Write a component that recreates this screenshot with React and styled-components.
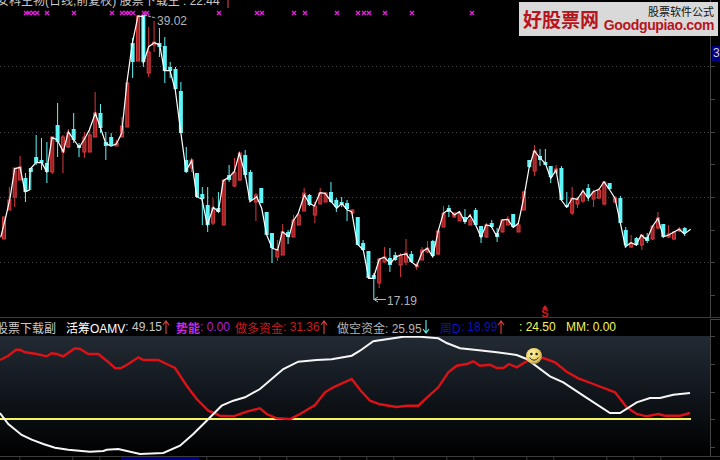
import styled, { createGlobalStyle } from 'styled-components';

const GlobalStyle = createGlobalStyle`
  html, body {
    margin: 0;
    padding: 0;
    background: #000;
  }
`;

const FONT = '"Liberation Sans", "Noto Sans CJK SC", sans-serif';

// type, high, body top, body bottom, low
const CANDLES = [
  ['r',217,217,239,239],['r',187,200,210,210],['r',168,168,197,207],['r',156,167,180,180],
  ['c',173,178,192,202],['c',168,168,172,190],['c',135,157,163,165],['c',138,160,163,170],
  ['c',142,163,172,183],['r',137,137,172,174],['c',103,125,142,157],['r',135,137,152,173],
  ['r',129,133,147,148],['c',113,129,140,143],['c',143,145,148,157],['r',132,137,152,158],
  ['r',130,135,152,152],['r',92,113,137,137],['c',104,113,128,133],['c',132,142,146,160],
  ['c',133,137,145,145],['r',140,143,146,146],['r',117,126,137,137],['r',82,83,127,127],
  ['c',38,43,62,78],['r',16,16,61,61],['c',15,15,62,67],['r',27,52,73,77],
  ['r',21,42,45,52],['c',28,43,47,57],['c',37,46,71,83],['c',62,67,71,78],
  ['c',67,69,89,90],['c',82,91,133,133],['c',147,160,172,173],['r',158,160,168,172],
  ['c',173,173,197,198],['c',187,194,199,225],['c',187,205,225,232],['r',198,208,223,225],
  ['c',192,208,212,213],['r',180,180,225,225],['c',165,175,180,182],['r',158,172,186,187],
  ['r',153,153,180,181],['c',150,155,175,178],['c',170,172,200,200],['r',193,195,202,221],
  ['c',188,188,203,203],['c',212,212,235,235],['c',233,233,248,263],['r',240,250,257,261],
  ['r',224,232,255,255],['c',230,232,237,244],['r',215,220,237,237],['r',213,215,225,225],
  ['r',188,193,211,211],['c',194,195,205,206],['r',202,206,215,223],['r',188,193,204,204],
  ['r',192,193,202,202],['c',182,192,202,203],['c',198,200,207,212],['c',197,202,205,207],
  ['c',200,203,209,221],['r',209,210,213,215],['c',217,217,245,245],['c',240,243,250,251],
  ['c',251,251,278,278],['c',273,275,279,300],['r',259,259,283,288],['r',247,257,262,263],
  ['c',248,258,265,272],['c',252,255,260,261],['r',253,255,265,277],['r',239,253,262,265],
  ['c',251,254,262,263],['r',263,265,267,270],['r',247,250,260,260],['r',241,248,252,253],
  ['c',240,241,256,257],['r',230,231,254,255],['r',206,213,227,227],['c',205,208,212,217],
  ['r',212,213,217,218],['r',211,213,221,221],['c',209,217,222,224],['r',214,220,225,225],
  ['c',208,210,225,225],['c',226,226,237,243],['r',223,225,237,238],['c',220,223,227,228],
  ['c',228,233,237,242],['r',219,220,232,232],['r',216,219,225,225],['c',214,214,227,228],
  ['r',223,225,232,232],['r',191,192,210,210],['c',160,160,167,168],['r',145,151,171,176],
  ['c',149,156,160,166],['c',149,162,165,165],['c',166,166,177,183],['r',165,169,173,174],
  ['c',166,168,200,201],['c',192,205,207,208],['r',187,198,213,215],['r',197,199,204,208],
  ['r',189,192,201,203],['c',184,188,197,201],['r',190,192,199,207],['r',188,190,198,199],
  ['r',181,182,204,205],['c',183,183,189,190],['r',196,198,202,203],['c',196,198,223,224],
  ['c',227,230,245,248],['r',235,243,247,248],['c',237,238,245,246],['r',235,235,245,250],
  ['c',233,237,241,243],['r',225,226,239,240],['r',212,218,228,229],['c',224,224,237,238],
  ['r',225,234,237,238],['r',231,232,239,240],['r',227,229,231,232],['c',227,228,233,236],
];

const zoomed = (ox, oy, pts) => pts.map(([x, y]) => [ox + x / 3, oy + y / 3]);
const toPoints = (pts) => pts.map(([x, y]) => `${x.toFixed(1)},${y.toFixed(1)}`).join(' ');

const PRICE_LINE = [
  ...zoomed(0, 130, [[2,322],[18,258],[30,205],[44,116],[60,112],[75,185],[88,180],[90,118],[108,98],[125,98],[140,125],[156,22],[172,30],[190,65],[205,5],[222,30],[238,52],[253,28],[268,0]]),
  ...zoomed(0, 0, [[286,340],[301,382],[317,430],[333,438],[349,432],[365,400],[381,245],[397,130],[414,48],[430,50],[430,190],[446,140],[463,128],[479,135],[493,212],[510,212],[526,270],[542,395]]),
  ...zoomed(0, 130, [[558,122],[575,92],[590,200],[606,208],[622,285],[640,232],[655,245],[670,152],[688,140],[703,125],[718,70]]),
  ...zoomed(240, 170, [[15,10],[30,95],[50,80],[65,115],[80,195],[97,235],[113,240],[127,185],[147,200],[160,152],[175,130],[193,75],[208,100],[223,108],[240,68],[255,70],[274,95],[290,115],[305,100],[322,120],[335,125],[352,222],[370,240],[386,325],[400,325],[418,268],[433,262],[451,280],[466,262],[482,255],[499,252],[514,275],[530,288],[547,245],[562,235],[578,260],[595,182],[610,130],[627,118],[643,135],[658,125],[675,155],[690,135],[707,165]]),
  ...zoomed(480, 130, [[3,322],[18,285],[33,288],[50,318],[66,270],[83,268],[100,292],[115,280],[132,200],[148,110],[163,62],[181,85],[196,100],[212,145],[228,120],[244,210],[260,232],[277,205],[292,208],[309,182],[325,205],[340,185],[357,178],[372,155],[388,178],[405,205],[421,278],[436,350],[453,338],[468,345],[484,315],[500,330],[517,290],[534,265],[550,320],[566,315],[583,305],[598,298],[613,312],[632,298]]),
];

const RED_LINE = [
  ...zoomed(0, -37, [[0,183],[25,170],[48,152],[60,152],[75,160],[110,165],[140,172],[155,163],[170,165],[190,172],[225,148],[240,150],[265,165],[295,165],[320,185],[345,207],[362,208],[385,195],[415,175],[430,183],[475,183],[500,195],[525,207],[560,260],[590,300],[625,335],[660,350],[700,352],[740,338],[780,328],[800,345],[830,358],[870,360],[900,345],[945,318],[975,280],[1000,265],[1055,240],[1080,272]]),
  ...zoomed(360, -37, [[30,305],[60,316],[110,324],[140,320],[175,320],[205,292],[235,265],[265,220],[290,200],[320,195],[340,187],[360,200],[390,197],[410,207],[430,207],[447,195],[470,205],[500,187],[520,177],[550,177],[585,190],[620,218],[655,238],[700,255],[765,280],[800,325],[830,345],[860,352],[895,345],[915,350],[960,350],[990,342]]),
];

const WHITE_LINE = [
  ...zoomed(0, -37, [[0,342],[25,375],[65,408],[95,422],[130,435],[165,446],[205,452],[270,458],[310,456],[320,452],[355,450],[420,465],[490,462],[540,440],[580,405],[620,365],[665,320],[700,305],[735,295],[780,270],[850,210],[895,188],[950,183],[995,181],[1055,170],[1080,155]]),
  ...zoomed(360, -37, [[40,127],[130,113],[180,113],[235,118],[260,132],[300,148],[350,153],[410,160],[470,168],[500,180],[570,232],[610,250],[670,290],[750,342],[780,342],[830,310],[870,297],[900,297],[940,287],[990,282]]),
];

const MARKS = [26,29,33,37,47,74,112,122,126,129,133,144,147,219,257,262,294,305,337,358,364,369,385,412,472];
const GRID_ROWS = [66, 132, 197, 262];
const AXIS_TICKS = [33, 66, 99, 132, 164, 197, 230, 262, 295];
const PANEL_TICKS = [0, 28, 56, 83, 111];

const Page = styled.div`
  width: 720px;
  height: 460px;
  background: #000;
  display: flex;
  flex-direction: column;
  overflow: hidden;
  font-family: ${FONT};
`;

const PriceRow = styled.div`
  height: 317px;
  display: flex;
  border-bottom: 1px solid #3c3c3c;
`;

const PricePane = styled.div`
  position: relative;
  width: 710px;
  height: 317px;
  overflow: hidden;
`;

const Canvas = styled.svg`
  display: block;
`;

const TitleLine = styled.div`
  position: absolute;
  top: -6px;
  left: -3px;
  display: flex;
  align-items: center;
  gap: 4px;
  font-size: 12px;
  line-height: 14px;
  color: #c8c8c8;
  white-space: nowrap;
`;

const Axis = styled.div`
  position: relative;
  flex: 1;
  border-left: 1px solid #444;
`;

const AxisTick = styled.i`
  position: absolute;
  left: 0;
  top: ${(p) => p.$y}px;
  width: 4px;
  height: 1px;
  background: #444;
`;

const AxisBadge = styled.div`
  position: absolute;
  left: 1px;
  top: 46px;
  width: 20px;
  height: 15px;
  padding-left: 1px;
  background: #000080;
  color: #d0d0d0;
  font-size: 12px;
  line-height: 15px;
`;

const Logo = styled.div`
  position: absolute;
  left: 519px;
  top: 2px;
  width: 199px;
  height: 34px;
  z-index: 2;
  display: flex;
  align-items: flex-end;
  padding: 0 4px 3px;
  box-sizing: border-box;
  background: #d9d9d9;
  white-space: nowrap;
`;

const LogoMark = styled.div`
  font-family: "Noto Sans CJK SC", sans-serif;
  font-size: 19px;
  font-weight: 700;
  line-height: 28px;
  color: #b8141e;
`;

const LogoSide = styled.div`
  flex: 1;
  display: flex;
  flex-direction: column;
  align-items: flex-end;
  margin-left: 3px;
`;

const LogoTag = styled.div`
  font-family: "Noto Sans CJK SC", sans-serif;
  font-size: 11px;
  line-height: 13px;
  color: #111;
`;

const LogoUrl = styled.div`
  font-size: 14px;
  font-weight: 700;
  line-height: 15px;
  letter-spacing: -0.35px;
  color: #b8141e;
`;

const InfoRow = styled.div`
  height: 19px;
  display: flex;
`;

const InfoBar = styled.div`
  width: 710px;
  display: flex;
  align-items: center;
  overflow: hidden;
  font-size: 12px;
  white-space: nowrap;
`;

const InfoItem = styled.div`
  flex: none;
  width: ${(p) => p.$w}px;
  display: flex;
  align-items: center;
  color: ${(p) => p.$color};
  margin-left: ${(p) => p.$shift || 0}px;
`;

const InfoName = styled.span`
  color: ${(p) => p.$color};
  font-weight: ${(p) => (p.$bold ? 700 : 400)};
`;

const InfoCorner = styled.div`
  flex: 1;
  border-left: 1px solid #444;
  border-top: 1px solid #444;
  margin-top: 1px;
`;

const IndicatorRow = styled.div`
  height: 120px;
  display: flex;
`;

const IndicatorPane = styled.div`
  position: relative;
  width: 710px;
  height: 120px;
  overflow: hidden;
  background: linear-gradient(180deg, #222a33 0%, #10151b 50%, #000 100%);
`;

const TimeAxis = styled.div`
  height: 3px;
  display: flex;
  border-top: 1px solid #3c3c3c;
  background: repeating-linear-gradient(90deg, transparent 0 26px, #3c3c3c 26px 26.7px) -6.7px 0;
`;

const ActiveRange = styled.div`
  width: 78px;
  margin-left: 121px;
  background: #00007c;
`;

const Arrow = ({ color, down }) => (
  <svg width="8" height="14" viewBox="0 0 8 14" fill="none" stroke={color} strokeWidth="1.1">
    {down ? <path d="M4 0V13M1 9L4 13L7 9" /> : <path d="M4 14V1M1 5L4 1L7 5" />}
  </svg>
);

const Candle = ({ index, data }) => {
  const [type, high, top, bottom, low] = data;
  const x = 4 + index * 5.36;
  const red = type === 'r';
  const color = red ? '#d83a3c' : '#5ef6f8';
  return (
    <g>
      <line x1={x} x2={x} y1={high} y2={low} stroke={color} strokeWidth="1" />
      {red ? (
        <rect x={x - 1.5} y={top} width="3" height={bottom - top} fill="#9c2226" stroke={color} strokeWidth="1" />
      ) : (
        <rect x={x - 2} y={top} width="4" height={Math.max(bottom - top, 1)} fill={color} />
      )}
    </g>
  );
};

const PriceChart = () => (
  <Canvas width="710" height="317">
    {GRID_ROWS.map((y) => (
      <line key={y} x1="0" x2="709" y1={y + 0.5} y2={y + 0.5} stroke="#454545" strokeDasharray="1 3" />
    ))}
    {MARKS.map((x) => (
      <g key={x} stroke="#e020d8" strokeWidth="1.5">
        <line x1={x - 2} x2={x + 2} y1="11" y2="15" />
        <line x1={x - 2} x2={x + 2} y1="15" y2="11" />
      </g>
    ))}
    {CANDLES.map((c, i) => (
      <Candle key={i} index={i} data={c} />
    ))}
    <polyline points={toPoints(PRICE_LINE)} fill="none" stroke="#fff" strokeWidth="1.2" />
    <path d="M144 15L156 18" stroke="#bbb" strokeDasharray="3 1" />
    <text x="157" y="25" fill="#b4b4b4" fontFamily={FONT} fontSize="12">39.02</text>
    <path d="M374 299.5H386M374 299.5L378 297M374 299.5L378 302" stroke="#b4b4b4" fill="none" />
    <text x="387" y="305" fill="#b4b4b4" fontFamily={FONT} fontSize="12">17.19</text>
    <path d="M545 305L548 309H542Z" fill="#d01c20" />
    <text x="545" y="317" fill="#d01c20" fontFamily={FONT} fontSize="11" fontWeight="700" textAnchor="middle">S</text>
  </Canvas>
);

const Smiley = ({ cx, cy }) => (
  <g>
    <defs>
      <radialGradient id="smile" cx="40%" cy="35%" r="70%">
        <stop offset="0%" stopColor="#fff6a8" />
        <stop offset="70%" stopColor="#e8c860" />
        <stop offset="100%" stopColor="#9c8a50" />
      </radialGradient>
    </defs>
    <circle cx={cx} cy={cy} r="8" fill="url(#smile)" />
    <circle cx={cx - 2.6} cy={cy - 2} r="1.3" fill="#222" />
    <circle cx={cx + 2.6} cy={cy - 2} r="1.3" fill="#222" />
    <path d={`M${cx - 4.5} ${cy + 1.5}Q${cx} ${cy + 7} ${cx + 4.5} ${cy + 1.5}`} fill="none" stroke="#333" strokeWidth="1" />
  </g>
);

const IndicatorChart = () => (
  <Canvas width="710" height="120">
    <line x1="0" x2="691" y1="83" y2="83" stroke="#f4f45c" strokeWidth="2" />
    <polyline points={toPoints(RED_LINE)} fill="none" stroke="#dc1216" strokeWidth="2.4" />
    <polyline points={toPoints(WHITE_LINE)} fill="none" stroke="#f6f6f6" strokeWidth="2" />
    <Smiley cx={534} cy={20} />
  </Canvas>
);

export default function App() {
  return (
    <Page>
      <GlobalStyle />
      <PriceRow>
        <PricePane>
          <TitleLine>
            安科生物(日线,前复权) 股票下载主 : 22.44
            <Arrow color="#e04040" />
          </TitleLine>
          <PriceChart />
        </PricePane>
        <Axis>
          {AXIS_TICKS.map((y) => (
            <AxisTick key={y} $y={y} />
          ))}
          <AxisBadge>35</AxisBadge>
        </Axis>
        <Logo>
          <LogoMark>好股票网</LogoMark>
          <LogoSide>
            <LogoTag>股票软件公式</LogoTag>
            <LogoUrl>Goodgupiao.com</LogoUrl>
          </LogoSide>
        </Logo>
      </PriceRow>
      <InfoRow>
        <InfoBar>
          <InfoItem $w={62} $shift={-4} $color="#c8c8c8">股票下载副</InfoItem>
          <InfoItem $w={112} $shift={8} $color="#c8c8c8">
            <InfoName $color="#fff">活筹OAMV</InfoName>: 49.15
            <Arrow color="#e04040" />
          </InfoItem>
          <InfoItem $w={59} $shift={-2} $color="#b020d8">
            <InfoName $color="#c828e0" $bold>势能</InfoName>: 0.00
          </InfoItem>
          <InfoItem $w={102} $color="#c81c20">
            <InfoName $color="#c81c20">做多资金</InfoName>: 31.36
            <Arrow color="#e04040" />
          </InfoItem>
          <InfoItem $w={103} $color="#b4b4b4">
            做空资金: 25.95
            <Arrow color="#5ef6f8" down />
          </InfoItem>
          <InfoItem $w={79} $color="#0a14b4">
            <InfoName $color="#0a14d0">周D</InfoName>: 18.99
            <Arrow color="#e04040" />
          </InfoItem>
          <InfoItem $w={47} $color="#f4f45c">: 24.50</InfoItem>
          <InfoItem $w={70} $color="#f4f45c">MM: 0.00</InfoItem>
        </InfoBar>
        <InfoCorner />
      </InfoRow>
      <IndicatorRow>
        <IndicatorPane>
          <IndicatorChart />
        </IndicatorPane>
        <Axis>
          {PANEL_TICKS.map((y) => (
            <AxisTick key={y} $y={y} />
          ))}
        </Axis>
      </IndicatorRow>
      <TimeAxis>
        <ActiveRange />
      </TimeAxis>
    </Page>
  );
}
